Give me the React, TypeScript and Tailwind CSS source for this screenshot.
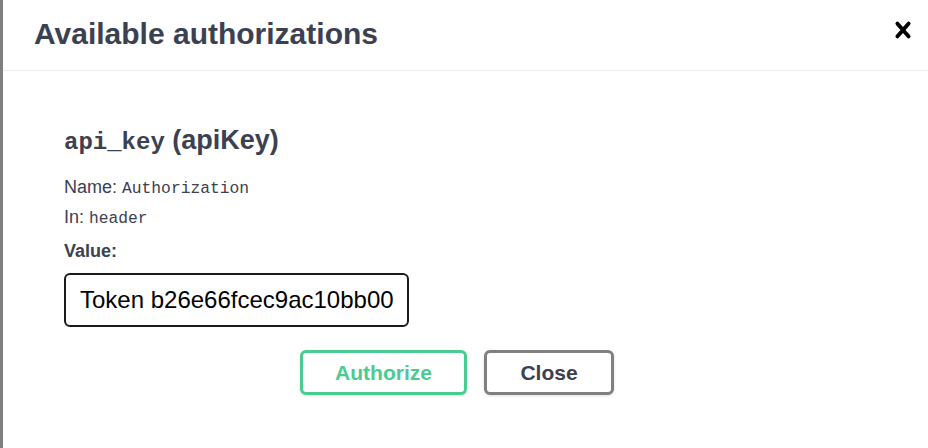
import React from "react";

export default function App() {
  const sans = { fontFamily: '"Liberation Sans", Arial, sans-serif' } as React.CSSProperties;
  const mono = { fontFamily: '"Liberation Mono", monospace' } as React.CSSProperties;
  return (
    <div className="w-[928px] h-[448px] flex bg-white overflow-hidden text-[#3b4151]" style={sans}>
      <div className="w-[3px] h-full bg-[#7f7f7f] shrink-0" />
      <div className="flex-1 flex flex-col relative">
        <div className="h-[71px] shrink-0 border-b border-[#ebebeb] flex items-center pl-[31px] pb-[2px]">
          <h3 className="text-[30px] font-bold leading-none text-[#3b4151] m-0">Available authorizations</h3>
        </div>
        <button className="absolute left-[884px] top-[14px] w-[32px] h-[32px] p-0 bg-transparent border-0">
          <svg viewBox="0 0 20 20" width="32" height="32">
            <path
              fill="#000"
              d="M14.348 14.849a1.2 1.2 0 0 1-1.697 0L10 11.819l-2.651 3.029a1.2 1.2 0 1 1-1.697-1.697l2.758-3.15-2.759-3.152a1.2 1.2 0 1 1 1.697-1.697L10 8.183l2.651-3.031a1.2 1.2 0 1 1 1.697 1.697l-2.758 3.152 2.758 3.15a1.2 1.2 0 0 1 0 1.698z"
            />
          </svg>
        </button>
        <div className="pl-[61px] w-[847px] flex flex-col">
          <h4 className="mt-[53px] h-[32px] text-[27px] font-bold leading-[32px] m-0 whitespace-nowrap">
            <code className="text-[24px] font-bold leading-none" style={mono}>api_key</code>
            <span> (apiKey)</span>
          </h4>
          <div className="mt-[16px] flex flex-col text-[18px]">
            <p className="m-0 h-[30px] leading-[30px] whitespace-nowrap">
              Name: <code className="text-[16.3px] leading-none" style={mono}>Authorization</code>
            </p>
            <p className="m-0 h-[30px] leading-[30px] whitespace-nowrap">
              In: <code className="text-[16.3px] leading-none" style={mono}>header</code>
            </p>
          </div>
          <label className="mt-[7px] h-[24px] text-[18px] font-bold leading-[24px]">Value:</label>
          <div className="mt-[10px] w-[345px] h-[54px] border-2 border-[#1b1b1b] rounded-[6px] flex items-center pl-[14px] overflow-hidden">
            <span className="text-[24px] text-black whitespace-nowrap">Token b26e66fcec9ac10bb00</span>
          </div>
          <div className="mt-[23px] flex justify-center gap-[17px]">
            <button className="w-[167px] h-[45px] border-[3px] border-[#49cc90] rounded-[6px] bg-white text-[#49cc90] text-[21px] font-bold shadow-[0_1px_3px_rgba(0,0,0,0.12)]">
              Authorize
            </button>
            <button className="w-[130px] h-[45px] border-[3px] border-[#808080] rounded-[6px] bg-white text-[#3b4151] text-[21px] font-bold shadow-[0_1px_3px_rgba(0,0,0,0.12)]">
              Close
            </button>
          </div>
        </div>
      </div>
    </div>
  );
}
